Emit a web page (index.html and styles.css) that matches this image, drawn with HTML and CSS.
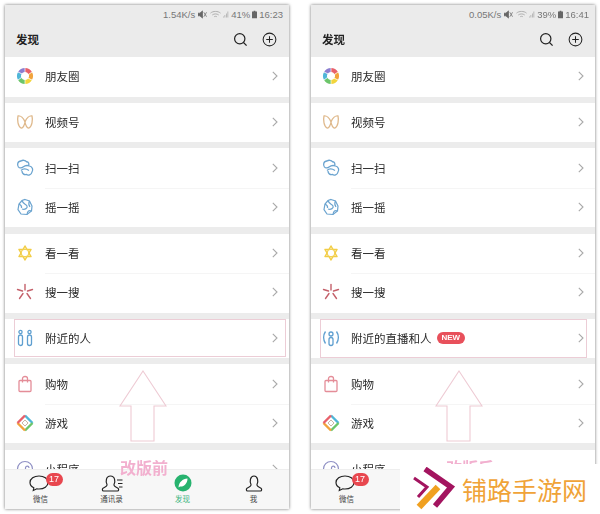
FILE: index.html
```html
<!DOCTYPE html>
<html lang="zh-CN">
<head>
    <meta charset="UTF-8">
    <meta name="viewport" content="width=device-width, initial-scale=1.0">
    <title>发现页改版前后</title>
    <link rel="stylesheet" href="styles.css">
</head>
<body>
    <svg class="defs" width="0" height="0">
        <symbol id="i-moments" viewBox="0 0 18 18">
            <g fill="none" stroke-width="4">
                <path d="M9 3A6 6 0 0 1 14.200 6" stroke="#e8606a"/>
                <path d="M14.200 6A6 6 0 0 1 14.200 12" stroke="#f2a33c"/>
                <path d="M14.200 12A6 6 0 0 1 9 15" stroke="#f2d53c"/>
                <path d="M9 15A6 6 0 0 1 3.800 12" stroke="#6cc56a"/>
                <path d="M3.800 12A6 6 0 0 1 3.800 6" stroke="#4fb6d8"/>
                <path d="M3.800 6A6 6 0 0 1 9 3" stroke="#8c7ed0"/>
            </g>
            <path d="M9 1L9 6M16 5L12 8M16 13L11.500 11M9 17L9 12M2 13L6 10M2 5L6.500 7" stroke="#fff" stroke-width=".7"/>
            <circle cx="9" cy="9" r="2.600" fill="#fff"/>
        </symbol>
        <symbol id="i-video" viewBox="0 0 18 18">
            <path d="M9 9C7.500 5 4.500 2.500 2 3C1 7 2 13.500 5 15C7 15.500 8.500 12 9 9C9.500 12 11 15.500 13 15C16 13.500 17 7 16 3C13.500 2.500 10.500 5 9 9Z" fill="none" stroke="#dfb98c" stroke-width="1.300"/>
        </symbol>
        <symbol id="i-scan" viewBox="0 0 18 18">
            <g fill="none" stroke="#6aa3cf" stroke-width="1.300">
                <path d="M2.500 8C.8 6 1.500 2 5 2C6.500 .8 9.500 1 10.500 2.800C12.500 2.500 13.500 5 12.500 6.500"/>
                <path d="M2.500 8C3.500 9.500 6 9 7 8C9 6.500 11 6 13.500 7C16.500 8 17.500 10.500 16 13C15.500 16 12 16.800 10.500 15.500C8 16 6 14.500 6 12"/>
                <path d="M5 11.500C7 9.500 10 9.500 13 11.500"/>
            </g>
        </symbol>
        <symbol id="i-shake" viewBox="0 0 18 18">
            <g fill="none" stroke="#6aa3cf" stroke-width="1.200">
                <path d="M9 1.500L13.500 3L16 8L15.500 13L11 16.500L5 16L2 11.500L3 6L6 2.500Z"/>
                <path d="M6 2.500C7 6 10 6 11 8C12 10 9 12 6 11M15.500 13C13 12 11.500 13 11 16.500M3 6C5 7 6 8 5.500 10M13.500 3C12.500 5 12.500 7 14 9"/>
            </g>
        </symbol>
        <symbol id="i-look" viewBox="0 0 18 18">
            <g fill="none" stroke="#f2cd45" stroke-width="1.500" stroke-linejoin="round">
                <path d="M9 2L15 12.500H3Z"/>
                <path d="M9 16L3 5.500H15Z"/>
            </g>
            <circle cx="9" cy="9" r="3.800" fill="#fff" stroke="#f2cd45"/>
        </symbol>
        <symbol id="i-search" viewBox="0 0 18 18">
            <g fill="none" stroke="#c4606a" stroke-width="1.400" stroke-linecap="round">
                <path d="M9 1.500V7"/>
                <path d="M1.500 6.500L6.500 8"/>
                <path d="M16.500 6.500L11.500 8"/>
                <path d="M7 10.500L3.500 15.500"/>
                <path d="M11 10.500L14.500 15.500"/>
            </g>
        </symbol>
        <symbol id="i-nearby" viewBox="0 0 18 18">
            <g fill="none" stroke="#5f9fd0" stroke-width="1.300">
                <circle cx="4.500" cy="3" r="1.600"/>
                <circle cx="13.500" cy="3" r="1.600"/>
                <rect x="2.500" y="6" width="4" height="10.500" rx="2"/>
                <rect x="11.500" y="6" width="4" height="10.500" rx="2"/>
            </g>
        </symbol>
        <symbol id="i-live" viewBox="0 0 18 18">
            <g fill="none" stroke="#5f9fd0" stroke-width="1.300">
                <circle cx="9" cy="5" r="2"/>
                <rect x="7" y="8.500" width="4" height="8" rx="2"/>
                <path d="M3.500 2.500C1 6 1 11 3.500 14.500M14.500 2.500C17 6 17 11 14.500 14.500"/>
            </g>
        </symbol>
        <symbol id="i-shop" viewBox="0 0 18 18">
            <g fill="none" stroke="#e48d98" stroke-width="1.300">
                <rect x="3" y="5.500" width="12" height="11" rx="1"/>
                <path d="M6.500 7.500V3.500C6.500 .8 11.500 .8 11.500 3.500V7.500"/>
            </g>
        </symbol>
        <symbol id="i-game" viewBox="0 0 18 18">
            <g fill="none" stroke-width="2.400">
                <path d="M9 1.500L16.500 9" stroke="#4fb6d8"/>
                <path d="M16.500 9L9 16.500" stroke="#6cc56a"/>
                <path d="M9 16.500L1.500 9" stroke="#f2a33c"/>
                <path d="M1.500 9L9 1.500" stroke="#e8606a"/>
                <path d="M6 9L9 6L12 9L9 12Z" stroke="#c9b7a6" stroke-width="1"/>
            </g>
        </symbol>
        <symbol id="i-mini" viewBox="0 0 18 18">
            <g fill="none" stroke="#8f90c4" stroke-width="1.200">
                <circle cx="9" cy="9" r="7.500"/>
                <path d="M6 10C6 12.500 9.500 12.500 9.500 10V8C9.500 5.500 13 5.500 13 8"/>
            </g>
        </symbol>
        <symbol id="i-chat" viewBox="0 0 20 17">
            <path d="M10 1C5 1 1 3.800 1 7.500C1 9.800 2.500 11.700 4.800 12.800L4.300 15.500L7.800 13.800C8.500 13.900 9.300 14 10 14C15 14 19 11.200 19 7.500C19 3.800 15 1 10 1Z" fill="none" stroke="#222" stroke-width="1.200"/>
        </symbol>
        <symbol id="i-contacts" viewBox="0 0 22 17">
            <g fill="none" stroke="#222" stroke-width="1.200">
                <path d="M6 9.500C4.500 7 4.800 1 9.500 1C14.200 1 14.500 7 13 9.500C12.500 11 14 11.800 17 13.300C18 14 17.800 16 16.500 16H2.500C1.200 16 1 14 2 13.300C5 11.800 6.500 11 6 9.500Z"/>
                <path d="M16 5H21.500M17 8.500H21.500M18 12H21.500"/>
            </g>
        </symbol>
        <symbol id="i-discover" viewBox="0 0 18 18">
            <circle cx="9" cy="9" r="8.500" fill="#27b36f"/>
            <path d="M4.500 13.500C5 8 8.500 5 13.500 4.500C13.500 9.500 10 13 6 12.500Z" fill="#fff"/>
        </symbol>
        <symbol id="i-me" viewBox="0 0 18 17">
            <path d="M6 9.500C4.500 7 5 1 9 1C13 1 13.500 7 12 9.500C11.500 11 13 11.800 16 13.300C17 14 16.800 16 15.500 16H2.500C1.200 16 1 14 2 13.300C5 11.800 6.500 11 6 9.500Z" fill="none" stroke="#222" stroke-width="1.200"/>
        </symbol>
        <symbol id="i-chevron" viewBox="0 0 6 10">
            <path d="M.8 .8L5 5L.8 9.200" fill="none" stroke="#a9a9a9" stroke-width="1.100"/>
        </symbol>
        <symbol id="i-sound-off" viewBox="0 0 10 9">
            <path d="M0 3H2L5 .5V8.500L2 6H0ZM6.500 2L9.500 7M9.500 2L6.500 7" fill="#666" stroke="#666" stroke-width=".8"/>
        </symbol>
        <symbol id="i-wifi" viewBox="0 0 12 9">
            <path d="M.5 3C3.500 .5 8.500 .5 11.500 3M2.500 5C4.500 3.500 7.500 3.500 9.500 5M4.500 7C5.500 6.300 6.500 6.300 7.500 7" fill="none" stroke="#aaa" stroke-width="1"/>
        </symbol>
        <symbol id="i-signal" viewBox="0 0 8 9">
            <path d="M0 8.500H1V7H0ZM2 8.500H3V5H2ZM4 8.500H5V3H4ZM6 8.500H7V.5H6Z" fill="#aaa"/>
        </symbol>
        <symbol id="i-battery" viewBox="0 0 6 9">
            <path d="M2 0H4V1H6V9H0V1H2Z" fill="#666"/>
        </symbol>
        <symbol id="i-up" viewBox="0 0 48 72">
            <path d="M24 1L47 36H35V71H12V36H1Z" fill="none" stroke="#eecbd4" stroke-width="1.100"/>
        </symbol>
    </svg>

    <div class="page">
        <!-- 改版前 -->
        <div class="phone">
            <div class="topbar">
                <div class="status">
                    <span>1.54K/s</span>
                    <svg class="st-sound"><use href="#i-sound-off"/></svg>
                    <svg class="st-wifi"><use href="#i-wifi"/></svg>
                    <svg class="st-signal"><use href="#i-signal"/></svg>
                    <span>41%</span>
                    <svg class="st-battery"><use href="#i-battery"/></svg>
                    <span>16:23</span>
                </div>
                <div class="titlebar">
                    <span class="title">发现</span>
                    <div class="actions">
                        <svg class="act" viewBox="0 0 16 16"><circle cx="7.200" cy="7.200" r="5.500" fill="none" stroke="#222" stroke-width="1.300"/><path d="M11.200 11.200L14.500 14.500" stroke="#222" stroke-width="1.300"/></svg>
                        <svg class="act" viewBox="0 0 16 16"><circle cx="8" cy="8" r="6.800" fill="none" stroke="#222" stroke-width="1.100"/><path d="M8 4.500V11.500M4.500 8H11.500" stroke="#222" stroke-width="1.100"/></svg>
                    </div>
                </div>
            </div>
            <div class="list">
                <div class="group"><div class="row"><svg class="ico"><use href="#i-moments"/></svg><span>朋友圈</span><svg class="chev"><use href="#i-chevron"/></svg></div></div>
                <div class="group"><div class="row"><svg class="ico"><use href="#i-video"/></svg><span>视频号</span><svg class="chev"><use href="#i-chevron"/></svg></div></div>
                <div class="group">
                    <div class="row"><svg class="ico"><use href="#i-scan"/></svg><span>扫一扫</span><svg class="chev"><use href="#i-chevron"/></svg></div>
                    <div class="row"><svg class="ico"><use href="#i-shake"/></svg><span>摇一摇</span><svg class="chev"><use href="#i-chevron"/></svg></div>
                </div>
                <div class="group">
                    <div class="row"><svg class="ico"><use href="#i-look"/></svg><span>看一看</span><svg class="chev"><use href="#i-chevron"/></svg></div>
                    <div class="row"><svg class="ico"><use href="#i-search"/></svg><span>搜一搜</span><svg class="chev"><use href="#i-chevron"/></svg></div>
                </div>
                <div class="group"><div class="row"><svg class="ico"><use href="#i-nearby"/></svg><span>附近的人</span><svg class="chev"><use href="#i-chevron"/></svg><i class="mark"></i></div></div>
                <div class="group">
                    <div class="row"><svg class="ico"><use href="#i-shop"/></svg><span>购物</span><svg class="chev"><use href="#i-chevron"/></svg></div>
                    <div class="row"><svg class="ico"><use href="#i-game"/></svg><span>游戏</span><svg class="chev"><use href="#i-chevron"/></svg></div>
                </div>
                <div class="group"><div class="row"><svg class="ico"><use href="#i-mini"/></svg><span>小程序</span><svg class="chev"><use href="#i-chevron"/></svg></div></div>
            </div>
            <div class="tabbar">
                <div class="tab"><span class="tab-icon"><svg class="ic-chat"><use href="#i-chat"/></svg><b class="badge">17</b></span><span>微信</span></div>
                <div class="tab"><span class="tab-icon"><svg class="ic-contacts"><use href="#i-contacts"/></svg></span><span>通讯录</span></div>
                <div class="tab on"><span class="tab-icon"><svg class="ic-discover"><use href="#i-discover"/></svg></span><span>发现</span></div>
                <div class="tab"><span class="tab-icon"><svg class="ic-me"><use href="#i-me"/></svg></span><span>我</span></div>
            </div>
            <svg class="arrow"><use href="#i-up"/></svg>
            <div class="note">改版前</div>
        </div>

        <!-- 改版后 -->
        <div class="phone phone-new">
            <div class="topbar">
                <div class="status">
                    <span>0.05K/s</span>
                    <svg class="st-sound"><use href="#i-sound-off"/></svg>
                    <svg class="st-wifi"><use href="#i-wifi"/></svg>
                    <svg class="st-signal"><use href="#i-signal"/></svg>
                    <span>39%</span>
                    <svg class="st-battery"><use href="#i-battery"/></svg>
                    <span>16:41</span>
                </div>
                <div class="titlebar">
                    <span class="title">发现</span>
                    <div class="actions">
                        <svg class="act" viewBox="0 0 16 16"><circle cx="7.200" cy="7.200" r="5.500" fill="none" stroke="#222" stroke-width="1.300"/><path d="M11.200 11.200L14.500 14.500" stroke="#222" stroke-width="1.300"/></svg>
                        <svg class="act" viewBox="0 0 16 16"><circle cx="8" cy="8" r="6.800" fill="none" stroke="#222" stroke-width="1.100"/><path d="M8 4.500V11.500M4.500 8H11.500" stroke="#222" stroke-width="1.100"/></svg>
                    </div>
                </div>
            </div>
            <div class="list">
                <div class="group"><div class="row"><svg class="ico"><use href="#i-moments"/></svg><span>朋友圈</span><svg class="chev"><use href="#i-chevron"/></svg></div></div>
                <div class="group"><div class="row"><svg class="ico"><use href="#i-video"/></svg><span>视频号</span><svg class="chev"><use href="#i-chevron"/></svg></div></div>
                <div class="group">
                    <div class="row"><svg class="ico"><use href="#i-scan"/></svg><span>扫一扫</span><svg class="chev"><use href="#i-chevron"/></svg></div>
                    <div class="row"><svg class="ico"><use href="#i-shake"/></svg><span>摇一摇</span><svg class="chev"><use href="#i-chevron"/></svg></div>
                </div>
                <div class="group">
                    <div class="row"><svg class="ico"><use href="#i-look"/></svg><span>看一看</span><svg class="chev"><use href="#i-chevron"/></svg></div>
                    <div class="row"><svg class="ico"><use href="#i-search"/></svg><span>搜一搜</span><svg class="chev"><use href="#i-chevron"/></svg></div>
                </div>
                <div class="group"><div class="row"><svg class="ico"><use href="#i-live"/></svg><span>附近的直播和人</span><em class="new">NEW</em><svg class="chev"><use href="#i-chevron"/></svg><i class="mark"></i></div></div>
                <div class="group">
                    <div class="row"><svg class="ico"><use href="#i-shop"/></svg><span>购物</span><svg class="chev"><use href="#i-chevron"/></svg></div>
                    <div class="row"><svg class="ico"><use href="#i-game"/></svg><span>游戏</span><svg class="chev"><use href="#i-chevron"/></svg></div>
                </div>
                <div class="group"><div class="row"><svg class="ico"><use href="#i-mini"/></svg><span>小程序</span><svg class="chev"><use href="#i-chevron"/></svg></div></div>
            </div>
            <div class="tabbar">
                <div class="tab"><span class="tab-icon"><svg class="ic-chat"><use href="#i-chat"/></svg><b class="badge">17</b></span><span>微信</span></div>
                <div class="tab"><span class="tab-icon"><svg class="ic-contacts"><use href="#i-contacts"/></svg></span><span>通讯录</span></div>
                <div class="tab on"><span class="tab-icon"><svg class="ic-discover"><use href="#i-discover"/></svg></span><span>发现</span></div>
                <div class="tab"><span class="tab-icon"><svg class="ic-me"><use href="#i-me"/></svg></span><span>我</span></div>
            </div>
            <svg class="arrow"><use href="#i-up"/></svg>
            <div class="note">改版后</div>
        </div>
    </div>

    <!-- 水印 -->
    <div class="watermark">
        <svg class="wm-logo" viewBox="0 0 43 44">
            <path d="M12 2L38 20L22 39" fill="none" stroke="#a3145f" stroke-width="5.500"/>
            <path d="M1 11L14 20L5 30" fill="none" stroke="#a3145f" stroke-width="3"/>
            <path d="M6 40L25 20" stroke="#f0a020" stroke-width="6.500"/>
        </svg>
        <span>铺路手游网</span>
    </div>
</body>
</html>
```

FILE: styles.css
```css
* { box-sizing: border-box; }
html, body { margin: 0; padding: 0; }
body { width: 600px; height: 514px; overflow: hidden; background: #fff; font-family: "Noto Sans CJK SC", "Liberation Sans", sans-serif; position: relative; }
.defs { position: absolute; }
.page { display: flex; gap: 22px; padding: 5px; filter: blur(0.4px); }

.phone { position: relative; display: flex; flex-direction: column; width: 284px; height: 504px; background: #ececec; box-shadow: 0 0 3px rgba(0,0,0,0.55); overflow: hidden; }
.topbar { flex: none; height: 52px; background: #ebebeb; }
.status { display: flex; justify-content: flex-end; align-items: center; gap: 2px; height: 18px; padding: 1px 6px 0 0; font-family: "Liberation Sans", sans-serif; font-size: 9.5px; color: #777; }
.st-sound { width: 9px; height: 9px; margin: 0 1px; }
.st-wifi { width: 11px; height: 9px; }
.st-signal { width: 6px; height: 9px; }
.st-battery { width: 5px; height: 9px; }
.titlebar { display: flex; justify-content: space-between; align-items: center; height: 32px; padding: 0 12px 0 11px; }
.title { font-size: 11.5px; font-weight: 700; color: #222; }
.actions { display: flex; gap: 14px; }
.act { width: 15px; height: 15px; }

.list { flex: 1; min-height: 0; overflow: hidden; display: flex; flex-direction: column; gap: 6.2px; }
.group { flex: none; background: #fff; }
.row { position: relative; display: flex; align-items: center; height: 39.5px; padding: 0 11px 1px 11px; font-size: 11.5px; color: #2a2a2a; }
.row + .row::before { content: ""; position: absolute; left: 40px; right: 0; top: 0; border-top: 1px solid #f5f5f5; }
.ico { width: 18px; height: 18px; margin-right: 11px; flex: none; }
.chev { width: 6px; height: 10px; margin-left: auto; flex: none; }
.new { margin-left: 5px; padding: 0 5px; border-radius: 6px; background: #e8505b; color: #fff; font: 700 8px/12px "Liberation Sans", sans-serif; }
.mark { position: absolute; left: 9px; right: 3px; top: 0; bottom: 1px; border: 1px solid #eccdd6; }
.phone-new .mark { right: 8px; bottom: 0; }

.tabbar { flex: none; display: grid; grid-template-columns: repeat(4, 1fr); height: 40px; background: #f7f7f7; border-top: 1px solid #eee; }
.tab { display: flex; flex-direction: column; align-items: center; font-size: 7.5px; line-height: 10px; color: #444; }
.tab.on { color: #3cb580; }
.tab-icon { position: relative; display: flex; justify-content: center; width: 24px; height: 17px; margin: 5px 0 2px; }
.ic-chat { width: 20px; height: 17px; margin-left: -4px; }
.ic-contacts { width: 22px; height: 17px; }
.ic-discover { width: 18px; height: 18px; margin-top: -1px; }
.ic-me { width: 18px; height: 17px; }
.badge { position: absolute; left: 17px; top: -2px; width: 17px; height: 13px; border-radius: 7px; background: #e8474f; color: #fff; font: 400 9px/13px "Liberation Sans", sans-serif; text-align: center; }

.arrow { position: absolute; left: 114px; top: 365px; width: 48px; height: 72px; }
.phone-new .arrow { left: 124px; }
.note { position: absolute; left: 115px; top: 452px; font-size: 16px; font-weight: 700; line-height: 20px; color: #f2b0cf; }
.phone-new .note { left: 135px; }

.watermark { position: absolute; left: 400px; top: 464px; width: 200px; height: 50px; display: flex; align-items: center; gap: 6px; padding-left: 13px; background: #fff; font-size: 25px; color: #f0a338; }
.wm-logo { width: 43px; height: 44px; flex: none; }
```
